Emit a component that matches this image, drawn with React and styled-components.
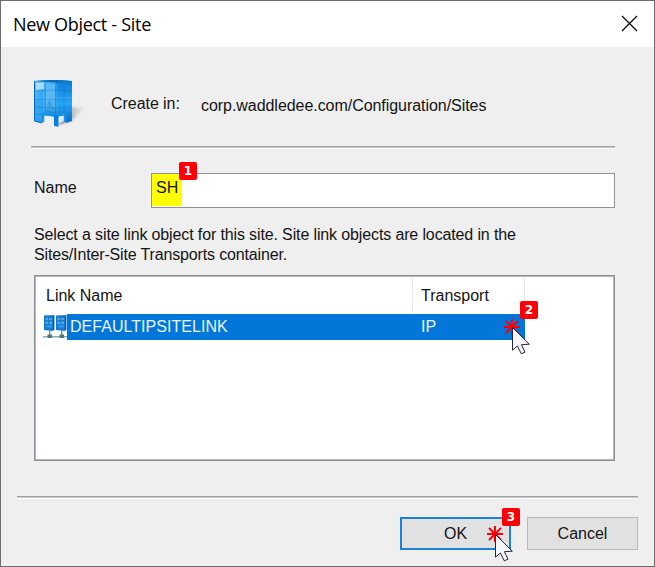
import React from "react";
import styled, { createGlobalStyle } from "styled-components";

const GlobalStyle = createGlobalStyle`
  *, *::before, *::after { box-sizing: border-box; }
  body { margin: 0; background: #efefef; }
`;

const Dialog = styled.div`
  width: 655px;
  height: 567px;
  display: flex;
  flex-direction: column;
  overflow: hidden;
  border: 1px solid #6c6c6c;
  background: #efefef;
  color: #141414;
  font-family: "Liberation Sans", Arial, sans-serif;
  font-size: 16px;
  line-height: 20px;
`;

const TitleBar = styled.header`
  height: 46px;
  flex: none;
  display: flex;
  align-items: center;
  justify-content: space-between;
  padding: 0 16px 0 12px;
  background: #fff;
`;

const Title = styled.h1`
  margin: 0;
  color: #000;
  font: 400 18px/24px "Open Sans", "Noto Sans", sans-serif;
  letter-spacing: -0.3px;
`;

const CloseButton = styled.button`
  width: 17px;
  height: 17px;
  margin-top: -1px;
  padding: 0;
  border: 0;
  background: none;
  svg { display: block; }
`;

const Label = styled.span`
  white-space: pre;
  letter-spacing: ${(p) => p.$spacing || 0}px;
`;

const Location = styled.section`
  display: flex;
  height: 99px;
  flex: none;
  padding: 32px 0 0 33px;
  svg { display: block; flex: none; }
`;

const LocationLabel = styled(Label)`
  width: 90px;
  margin: 15px 0 0 26px;
`;

const LocationPath = styled(Label)`
  margin-top: 17px;
`;

const Divider = styled.hr`
  flex: none;
  height: 3px;
  margin: ${(p) => p.$top || 0}px ${(p) => p.$right}px 0 ${(p) => p.$left}px;
  border: 0;
  border-top: 1px solid #a0a0a0;
  background: linear-gradient(#c9c9c9 50%, #fff 50%);
`;

const NameRow = styled.div`
  display: flex;
  height: 35px;
  flex: none;
  margin: 24px 39px 0 33px;
`;

const NameLabel = styled(Label)`
  width: 117px;
  padding-top: 5px;
`;

const Field = styled.div`
  position: relative;
  flex: 1;
  display: flex;
  border: 1px solid #929296;
  background: #fff;
`;

const Highlight = styled.span`
  width: 30px;
  height: 32px;
  padding: 4px 0 0 4px;
  background: #ff0;
`;

const Hint = styled.p`
  flex: none;
  display: flex;
  flex-direction: column;
  height: 40px;
  margin: 17px 0 0 33px;
`;

const LinkTable = styled.div`
  flex: none;
  height: 186px;
  margin: 10px 39px 0 33px;
  padding-top: 2px;
  border: 1px solid #8c9098;
  box-shadow: inset 0 0 0 1px #b4b6ba;
  background: #fff;
`;

const HeaderRow = styled.div`
  display: grid;
  grid-template-columns: 378px 112px;
  height: 35px;
`;

const HeaderCell = styled.div`
  padding: 8px 0 0 ${(p) => p.$indent}px;
  border-right: 1px solid #e9e9e9;
`;

const LinkRow = styled.div`
  display: flex;
  width: 490px;
  height: 26px;
  margin-top: 1px;
  padding-left: 8px;
  svg { display: block; flex: none; }
`;

const Selection = styled.div`
  position: relative;
  display: grid;
  grid-template-columns: 351px 1fr;
  flex: 1;
  padding: 3px 0 0 3px;
  background: #0277d9;
  color: #eaf5ff;
`;

const Footer = styled.footer`
  display: flex;
  justify-content: flex-end;
  gap: 16px;
  margin-top: 18px;
  padding-right: 16px;
`;

const PushButton = styled.button`
  position: relative;
  width: 111px;
  height: 33px;
  padding: 1px 0 0;
  border: ${(p) => (p.$primary ? "2px solid #1c82d9" : "1px solid #b8b8b8")};
  background: #e1e1e1;
  color: #141414;
  font: inherit;
`;

const StepBadge = styled.span`
  position: absolute;
  left: ${(p) => p.$x}px;
  top: ${(p) => p.$y}px;
  width: 18px;
  height: 18px;
  border-radius: 2px;
  background: #fb0007;
  color: #fff;
  font: 700 12px/18px "DejaVu Sans", "Open Sans", sans-serif;
  text-align: center;
`;

const PointerWrap = styled.svg`
  position: absolute;
  left: ${(p) => p.$x}px;
  top: ${(p) => p.$y}px;
  z-index: 1;
  overflow: visible;
`;

function ClickPointer({ x, y }) {
  return (
    <PointerWrap $x={x} $y={y} width="28" height="36" viewBox="-9 -9 28 36">
      <path d="M-8 0H8M0-8V8M-6-6L6 6M6-6L-6 6" stroke="#fb0007" strokeWidth="2" fill="none" />
      <path d="M.5 .5V23.2L5.4 19L9.3 26.8L13 25.2L9.4 17.7L17.3 17.2Z" fill="#f6f6f9" stroke="#25253a" strokeWidth="1" />
    </PointerWrap>
  );
}

function BuildingIcon() {
  return (
    <svg width="51" height="51" viewBox="0 0 51 51">
      <defs>
        <linearGradient id="front" x1="0" y1="0" x2="1" y2="1">
          <stop offset="0" stopColor="#72c8fa" />
          <stop offset=".3" stopColor="#38aaf3" />
          <stop offset="1" stopColor="#1a8fe8" />
        </linearGradient>
        <linearGradient id="side" x1="0" y1="0" x2="0" y2="1">
          <stop offset="0" stopColor="#0b7bd6" />
          <stop offset=".55" stopColor="#25a6f5" />
          <stop offset="1" stopColor="#0a6cc4" />
        </linearGradient>
        <linearGradient id="shade" x1="0" y1="0" x2="1" y2="0">
          <stop offset="0" stopColor="#666" stopOpacity=".9" />
          <stop offset="1" stopColor="#aaa" stopOpacity=".1" />
        </linearGradient>
        <filter id="soft"><feGaussianBlur stdDeviation=".8" /></filter>
      </defs>
      <path d="M24 46L37 28L50 29L38 42Z" fill="url(#shade)" filter="url(#soft)" />
      <path d="M0 2L22 1V38L9 36V44L0 42Z" fill="url(#front)" />
      <path d="M22 1L38 2V42L32 44V36L22 38Z" fill="url(#side)" />
      <path d="M0 2Q18 0 38 2L22 3.5Z" fill="#096bb9" />
      <path d="M2 4L10 3.5V10L2 11Z" fill="#c6ecff" opacity=".75" />
      <path d="M12 4L21 5V33L12 31Z" fill="#82cdf8" opacity=".5" />
      <path d="M12 31L15 21L22 31V35L12 33Z" fill="#087dbd" opacity=".35" />
      <path d="M1 12L22 11L37 12M1 20L22 20L37 20M1 28L22 29L37 28M1 35L8 36M33 35L37 34M11 4V34M22 4V36M30 4V36" fill="none" stroke="#086fcb" strokeWidth=".8" opacity=".45" />
      <path d="M1 19H37M10 4V34M23 5V35" fill="none" stroke="#8ed8ff" strokeWidth=".6" opacity=".55" />
      <path d="M.5 2V42L8 44" fill="none" stroke="#0967b9" strokeWidth="1" />
      <path d="M10 37L20 38V44L10 42Z" fill="#e8f2fa" />
      <path d="M25 38L30 37V42L25 44Z" fill="#dcedf9" />
      <path d="M9 43V35L22 36.5L31 34.5V43" fill="none" stroke="#1b8fe8" strokeWidth="2.5" />
      <path d="M20 36H24.5V47.8L20 47Z" fill="#087de4" />
    </svg>
  );
}

function SiteLinkIcon() {
  return (
    <svg width="24" height="26" viewBox="0 0 24 26">
      <path d="M0 22.8H24" stroke="#5f98bd" strokeWidth="1.2" />
      {[1, 13].map((x) => (
        <g key={x} transform={`translate(${x} 0)`}>
          <path d="M0 1.5L10.5 1V16L8.5 17L0 16Z" fill="#177acb" />
          <path d="M1.5 4L4 3.7V6L1.5 6ZM5 4L8 4V6H5ZM1.5 7.5H4V10H1.5ZM5 7.5H8V10H5Z" fill="#4fa6e6" />
          <path d="M2 11H8V14L2 13Z" fill="#2897e8" />
          <path d="M9.5 2V16" stroke="#075cae" />
          <path d="M5.7 16V22" stroke="#5696bd" strokeWidth="1.5" />
          <path d="M3.5 20.5H8V24H3.5Z" fill="#54766f" />
        </g>
      ))}
    </svg>
  );
}

export default function App() {
  return (
    <>
      <GlobalStyle />
      <Dialog>
        <TitleBar>
          <Title>New Object - Site</Title>
          <CloseButton aria-label="Close">
            <svg width="17" height="17" viewBox="0 0 17 17">
              <path d="M1 1L16 16M16 1L1 16" stroke="#000" strokeWidth="1.2" />
            </svg>
          </CloseButton>
        </TitleBar>
        <Location>
          <BuildingIcon />
          <LocationLabel $spacing={-0.05}>Create in:</LocationLabel>
          <LocationPath $spacing={-0.05}>corp.waddledee.com/Configuration/Sites</LocationPath>
        </Location>
        <Divider $left={30} $right={39} />
        <NameRow>
          <NameLabel>Name</NameLabel>
          <Field>
            <Highlight>SH</Highlight>
            <StepBadge $x={27} $y={-12}>1</StepBadge>
          </Field>
        </NameRow>
        <Hint>
          <Label $spacing={-0.13}>Select a site link object for this site. Site link objects are located in the</Label>
          <Label $spacing={-0.15}>Sites/Inter-Site Transports container.</Label>
        </Hint>
        <LinkTable>
          <HeaderRow>
            <HeaderCell $indent={11}>Link Name</HeaderCell>
            <HeaderCell $indent={8}>Transport</HeaderCell>
          </HeaderRow>
          <LinkRow>
            <SiteLinkIcon />
            <Selection>
              <Label $spacing={0.04}>DEFAULTIPSITELINK</Label>
              <Label>IP</Label>
              <StepBadge $x={453} $y={-13}>2</StepBadge>
              <ClickPointer x={436} y={4} />
            </Selection>
          </LinkRow>
        </LinkTable>
        <Divider $top={35} $left={16} $right={16} />
        <Footer>
          <PushButton $primary>
            OK
            <StepBadge $x={100} $y={-11}>3</StepBadge>
            <ClickPointer x={84} y={6} />
          </PushButton>
          <PushButton>Cancel</PushButton>
        </Footer>
      </Dialog>
    </>
  );
}
